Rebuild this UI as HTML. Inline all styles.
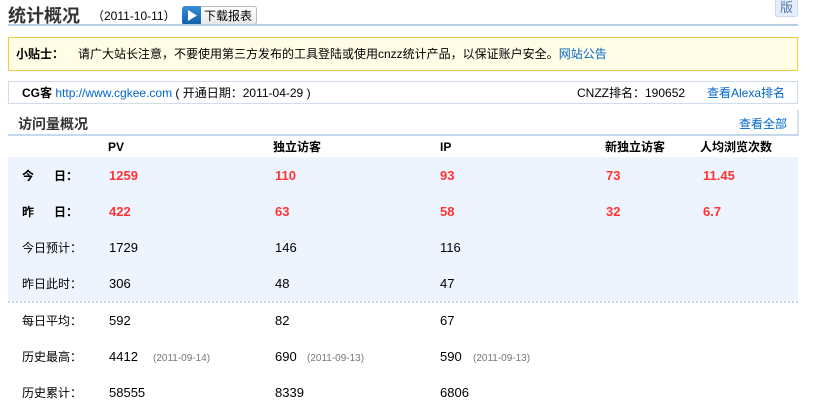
<!DOCTYPE html>
<html><head><meta charset="utf-8"><style>
*{margin:0;padding:0;box-sizing:border-box}
body{width:839px;height:412px;overflow:hidden;background:#fff;font-family:"Liberation Sans","Noto Sans CJK SC",sans-serif;font-size:12px;color:#000;position:relative}
.a{position:absolute;white-space:nowrap;line-height:14px}
a{color:#0066cc;text-decoration:none}
.r{color:#ff3333;font-weight:bold;font-size:13px}
.n{font-size:13px}
.g{color:#777;font-size:10px}
.b{font-weight:bold}
</style></head><body>
<div class="a" style="left:8px;top:6px;font-size:18px;line-height:20px;font-weight:bold;color:#333">统计概况</div>
<div class="a" style="left:92px;top:9px;font-size:12px">（2011-10-11）</div>
<div class="a" style="left:182px;top:6px;width:75px;height:19px;border:1px solid #bbb;border-radius:3px;background:linear-gradient(#fff,#e8e8e8)"></div>
<div class="a" style="left:182px;top:6px;width:19px;height:19px;background:linear-gradient(#3a8fd6,#0d5ea8);border-radius:3px 0 0 3px"></div>
<svg class="a" style="left:186px;top:9px" width="12" height="13"><path d="M2 1 L11 6.5 L2 12 Z" fill="#fff"/></svg>
<div class="a" style="left:204px;top:9px;font-size:12px">下载报表</div>
<div class="a" style="left:775px;top:-2px;width:23px;height:19px;border:1px solid #c8d8ee;border-radius:3px;background:#e4eefb;color:#5577aa;font-size:13px;text-align:center;line-height:17px">版</div>
<div class="a" style="left:8px;top:24px;width:790px;height:2px;background:#b8cde6"></div>
<div class="a" style="left:8px;top:37px;width:790px;height:34px;border:1px solid #f5c842;background:#fffde6"></div>
<div class="a" style="left:16px;top:47px;font-weight:bold">小贴士：</div>
<div class="a" style="left:78px;top:47px">请广大站长注意，不要使用第三方发布的工具登陆或使用cnzz统计产品，以保证账户安全。<a>网站公告</a></div>
<div class="a" style="left:8px;top:81px;width:790px;height:23px;border:1px solid #d0dcea"></div>
<div class="a" style="left:22px;top:86px"><b>CG客</b> <a>http://www.cgkee.com</a> ( 开通日期：2011-04-29 )</div>
<div class="a" style="left:577px;top:86px">CNZZ排名：190652</div>
<div class="a" style="left:707px;top:86px"><a>查看Alexa排名</a></div>
<div class="a" style="left:797px;top:110px;width:2px;height:26px;background:#d8e2ee"></div>
<div class="a" style="left:18px;top:116px;font-size:14px;line-height:16px;font-weight:bold;color:#333">访问量概况</div>
<div class="a" style="left:739px;top:117px"><a>查看全部</a></div>
<div class="a" style="left:8px;top:134px;width:790px;height:2px;background:#c8d8ec"></div>
<div class="a b" style="left:108px;top:140px">PV</div>
<div class="a b" style="left:273px;top:140px">独立访客</div>
<div class="a b" style="left:440px;top:140px">IP</div>
<div class="a b" style="left:605px;top:140px">新独立访客</div>
<div class="a b" style="left:700px;top:140px">人均浏览次数</div>
<div class="a" style="left:8px;top:157px;width:790px;height:144px;background:#edf4fd"></div>
<div class="a" style="left:8px;top:301px;width:790px;border-top:2px dotted #c8d8ec"></div>
<div class="a b" style="left:22px;top:169px">今&nbsp;&nbsp;&nbsp;&nbsp;&nbsp;&nbsp;日：</div>
<div class="a r" style="left:109px;top:169px">1259</div><div class="a r" style="left:275px;top:169px">110</div><div class="a r" style="left:440px;top:169px">93</div><div class="a r" style="left:606px;top:169px">73</div><div class="a r" style="left:703px;top:169px">11.45</div>
<div class="a b" style="left:22px;top:205px">昨&nbsp;&nbsp;&nbsp;&nbsp;&nbsp;&nbsp;日：</div>
<div class="a r" style="left:109px;top:205px">422</div><div class="a r" style="left:275px;top:205px">63</div><div class="a r" style="left:440px;top:205px">58</div><div class="a r" style="left:606px;top:205px">32</div><div class="a r" style="left:703px;top:205px">6.7</div>
<div class="a" style="left:22px;top:241px">今日预计：</div>
<div class="a n" style="left:109px;top:241px">1729</div><div class="a n" style="left:275px;top:241px">146</div><div class="a n" style="left:440px;top:241px">116</div>
<div class="a" style="left:22px;top:277px">昨日此时：</div>
<div class="a n" style="left:109px;top:277px">306</div><div class="a n" style="left:275px;top:277px">48</div><div class="a n" style="left:440px;top:277px">47</div>
<div class="a" style="left:22px;top:314px">每日平均：</div>
<div class="a n" style="left:109px;top:314px">592</div><div class="a n" style="left:275px;top:314px">82</div><div class="a n" style="left:440px;top:314px">67</div>
<div class="a" style="left:22px;top:350px">历史最高：</div>
<div class="a n" style="left:109px;top:350px">4412</div><div class="a g" style="left:153px;top:352px">(2011-09-14)</div>
<div class="a n" style="left:275px;top:350px">690</div><div class="a g" style="left:307px;top:352px">(2011-09-13)</div>
<div class="a n" style="left:440px;top:350px">590</div><div class="a g" style="left:473px;top:352px">(2011-09-13)</div>
<div class="a" style="left:22px;top:386px">历史累计：</div>
<div class="a n" style="left:109px;top:386px">58555</div><div class="a n" style="left:275px;top:386px">8339</div><div class="a n" style="left:440px;top:386px">6806</div>
</body></html>
